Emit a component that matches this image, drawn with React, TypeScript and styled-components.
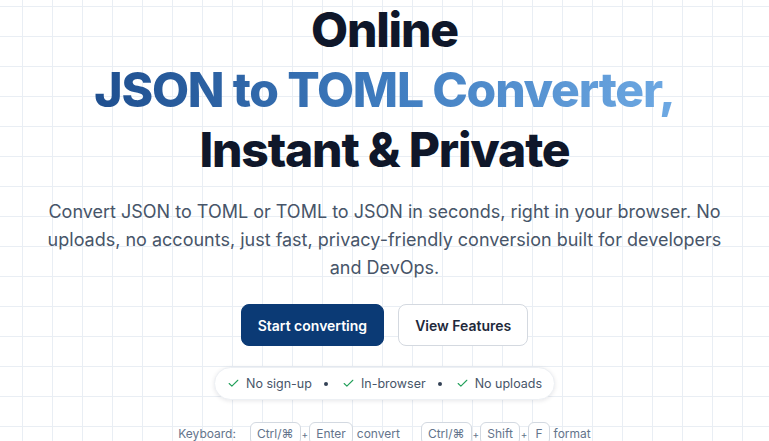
import { Fragment } from 'react';
import styled, { createGlobalStyle } from 'styled-components';
import { Check } from 'lucide-react';

const GlobalStyle = createGlobalStyle`
  html, body {
    margin: 0;
    padding: 0;
    background: #ffffff;
  }
  * {
    box-sizing: border-box;
  }
`;

const Page = styled.div`
  min-height: 441px;
  width: 100%;
  overflow: hidden;
  font-family: Inter, 'Noto Sans', sans-serif;
  background-color: #ffffff;
  background-image:
    linear-gradient(to right, #e9eef4 1px, transparent 1px),
    linear-gradient(to bottom, #e9eef4 1px, transparent 1px);
  background-size: 30px 30px;
  background-position: 22px 6px;
`;

const Hero = styled.section`
  display: flex;
  flex-direction: column;
  align-items: center;
  text-align: center;
`;

const Title = styled.h1`
  margin: 0;
  font-size: 48px;
  line-height: 60px;
  font-weight: 800;
  letter-spacing: -0.025em;
  color: #0f172a;
`;

const Gradient = styled.span`
  background: linear-gradient(90deg, #1f4f8f 0%, #3f7cbf 50%, #6ea9e3 100%);
  -webkit-background-clip: text;
  background-clip: text;
  color: transparent;
`;

const Lead = styled.p`
  margin: 18px 0 0;
  max-width: 680px;
  font-size: 18px;
  line-height: 28px;
  color: #475569;
`;

const Actions = styled.div`
  display: flex;
  gap: 14px;
  margin-top: 22px;
`;

const Button = styled.button<{ $primary?: boolean }>`
  height: 42px;
  padding: 0 16px;
  border-radius: 8px;
  font-family: inherit;
  font-size: 14px;
  font-weight: 600;
  cursor: pointer;
  border: 1px solid ${(p) => (p.$primary ? '#0b3a75' : '#d4d9e0')};
  background: ${(p) => (p.$primary ? '#0b3a75' : '#ffffff')};
  color: ${(p) => (p.$primary ? '#ffffff' : '#1e293b')};
`;

const Badges = styled.div`
  display: flex;
  align-items: center;
  margin-top: 21px;
  height: 33px;
  padding: 0 12px;
  border-radius: 999px;
  background: #ffffff;
  border: 1px solid #edf0f4;
  box-shadow: 0 1px 4px rgba(15, 23, 42, 0.1);
  font-size: 12.5px;
  color: #475569;
`;

const Badge = styled.span`
  display: inline-flex;
  align-items: center;
  gap: 6px;
`;

const Dot = styled.span`
  flex: none;
  width: 4px;
  height: 4px;
  margin: 0 14px 0 12px;
  border-radius: 50%;
  background: #334155;
`;

const Shortcuts = styled.div`
  display: flex;
  align-items: center;
  margin-top: 22px;
  font-size: 12px;
  color: #64748b;
`;

const Label = styled.span`
  margin-right: 14px;
`;

const Combo = styled.span`
  display: inline-flex;
  align-items: center;
  gap: 1px;
  & + & {
    margin-left: 21px;
  }
`;

const Kbd = styled.kbd`
  font-family: inherit;
  font-size: 12px;
  height: 23px;
  display: inline-flex;
  align-items: center;
  padding: 0 6px;
  border: 1px solid #d3d9e1;
  border-radius: 6px;
  background: #ffffff;
  color: #64748b;
`;

const Plus = styled.span`
  font-size: 10px;
  color: #64748b;
`;

const Action = styled.span`
  margin-left: 3px;
`;

const checks = ['No sign-up', 'In-browser', 'No uploads'];

export default function App() {
  return (
    <Page>
      <GlobalStyle />
      <Hero>
        <Title>
          Online
          <br />
          <Gradient>JSON to TOML Converter,</Gradient>
          <br />
          Instant &amp; Private
        </Title>
        <Lead>
          Convert JSON to TOML or TOML to JSON in seconds, right in your browser. No uploads, no
          accounts, just fast, privacy-friendly conversion built for developers and DevOps.
        </Lead>
        <Actions>
          <Button $primary>Start converting</Button>
          <Button>View Features</Button>
        </Actions>
        <Badges>
          {checks.map((label, i) => (
            <Fragment key={label}>
              {i > 0 && <Dot />}
              <Badge>
                <Check size={13} color="#22a05a" strokeWidth={2} />
                {label}
              </Badge>
            </Fragment>
          ))}
        </Badges>
        <Shortcuts>
          <Label>Keyboard:</Label>
          <Combo>
            <Kbd>Ctrl/⌘</Kbd>
            <Plus>+</Plus>
            <Kbd>Enter</Kbd>
            <Action>convert</Action>
          </Combo>
          <Combo>
            <Kbd>Ctrl/⌘</Kbd>
            <Plus>+</Plus>
            <Kbd>Shift</Kbd>
            <Plus>+</Plus>
            <Kbd>F</Kbd>
            <Action>format</Action>
          </Combo>
        </Shortcuts>
      </Hero>
    </Page>
  );
}
